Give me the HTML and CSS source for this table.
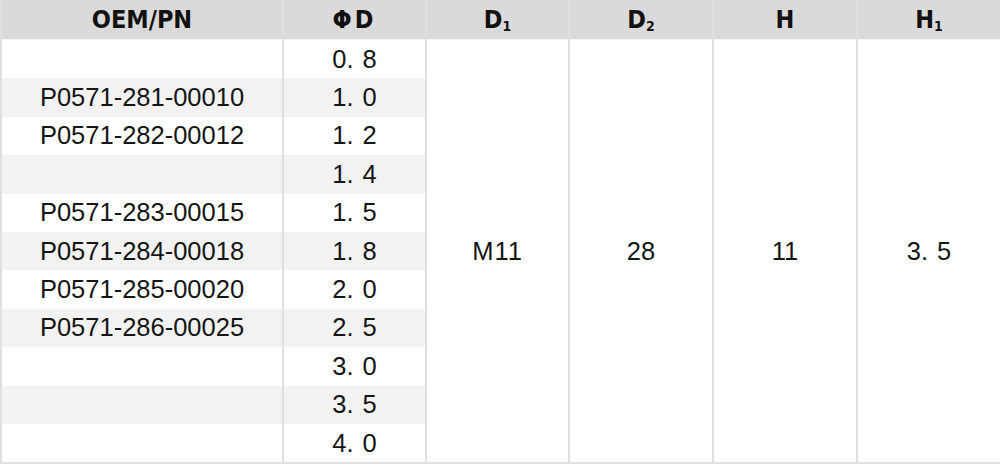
FILE: index.html
```html
<!DOCTYPE html>
<html>
<head>
	<meta charset="utf-8">
	<title>OEM/PN</title>
	<link rel="stylesheet" href="styles.css">
</head>
<body>
	<table class="spec">
		<colgroup>
			<col class="c-pn">
			<col class="c-d">
			<col class="c-d1">
			<col class="c-d2">
			<col class="c-h">
			<col class="c-h1">
		</colgroup>
		<tr class="head">
			<th>OEM/PN</th>
			<th class="phi">ΦD</th>
			<th>D<sub>1</sub></th>
			<th>D<sub>2</sub></th>
			<th>H</th>
			<th>H<sub>1</sub></th>
		</tr>
		<tr>
			<td></td>
			<td class="num">0. 8</td>
			<td rowspan="11" class="merged mono">M11</td>
			<td rowspan="11" class="merged">28</td>
			<td rowspan="11" class="merged">11</td>
			<td rowspan="11" class="merged num">3. 5</td>
		</tr>
		<tr class="alt"><td>P0571-281-00010</td><td class="num">1. 0</td></tr>
		<tr><td>P0571-282-00012</td><td class="num">1. 2</td></tr>
		<tr class="alt"><td></td><td class="num">1. 4</td></tr>
		<tr><td>P0571-283-00015</td><td class="num">1. 5</td></tr>
		<tr class="alt"><td>P0571-284-00018</td><td class="num">1. 8</td></tr>
		<tr><td>P0571-285-00020</td><td class="num">2. 0</td></tr>
		<tr class="alt"><td>P0571-286-00025</td><td class="num">2. 5</td></tr>
		<tr><td></td><td class="num">3. 0</td></tr>
		<tr class="alt"><td></td><td class="num">3. 5</td></tr>
		<tr><td></td><td class="num">4. 0</td></tr>
	</table>
</body>
</html>
```
FILE: styles.css
```css
body{margin: 0;background-color: #fff;font-family: 'Liberation Sans', Arial, sans-serif;color: #151515;}
.spec{width: 1000px;border-collapse: collapse;table-layout: fixed;font-size: 25.5px;}
.c-pn{width: 282px;}
.c-d, .c-d1{width: 143px;}
.c-d2, .c-h{width: 144px;}
.c-h1{width: 144px;}
th, td{padding: 0;text-align: center;border-left: 2px solid #e0e0e0;border-right: 2px solid #e0e0e0;}
.head th{height: 39px;background-color: #dadada;font-family: 'Liberation Sans Narrow', 'DejaVu Sans Condensed', 'DejaVu Sans', sans-serif;font-stretch: condensed;font-weight: bold;font-size: 25px;color: #111;border-bottom: 1px solid #f4f4f4;}
.head sub{font-size: 14px;vertical-align: -3px;}
.phi{letter-spacing: 3px;}
td{height: 38.4px;}
tr:last-child td{border-bottom: 2px solid #e0e0e0;}
.alt td{background-color: #f2f2f2;}
.alt td.merged{background-color: #fff;}
.merged{vertical-align: middle;border-bottom: 2px solid #e0e0e0;}
.num{word-spacing: 2px;}
.mono{letter-spacing: 1px;}
```
